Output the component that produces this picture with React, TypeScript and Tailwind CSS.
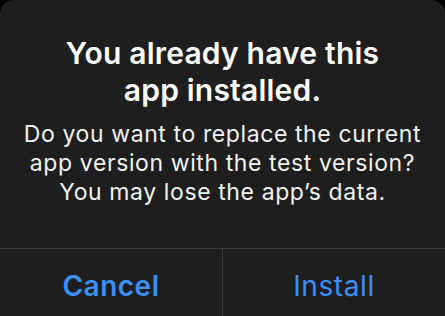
export default function App() {
  return (
    <div className="w-[445px] h-[316px] overflow-hidden bg-black font-['Inter',sans-serif]">
      <div className="h-full flex flex-col bg-[#1e1e1e] rounded-t-[14px] antialiased">
        <div className="pt-[35px] pb-[41px] px-2 text-center">
          <h1 className="text-[30px] leading-[37px] font-semibold text-white tracking-[0.2px]">
            You already have this
            <br />
            app installed.
          </h1>
          <p className="mt-[11px] text-[23px] leading-[29px] text-[#f2f2f2] tracking-[0.6px]">
            Do you want to replace the current
            <br />
            app version with the test version?
            <br />
            You may lose the app’s data.
          </p>
        </div>
        <div className="flex border-t border-[#3d3d3d] flex-1">
          <button className="flex-1 pt-[16px] text-[28px] font-semibold text-[#3c8ff5] border-r border-[#3d3d3d] tracking-[0.5px] flex justify-center items-start">
            Cancel
          </button>
          <button className="flex-1 pt-[16px] text-[28px] text-[#3c8ff5] tracking-[0.6px] flex justify-center items-start">
            Install
          </button>
        </div>
      </div>
    </div>
  )
}
